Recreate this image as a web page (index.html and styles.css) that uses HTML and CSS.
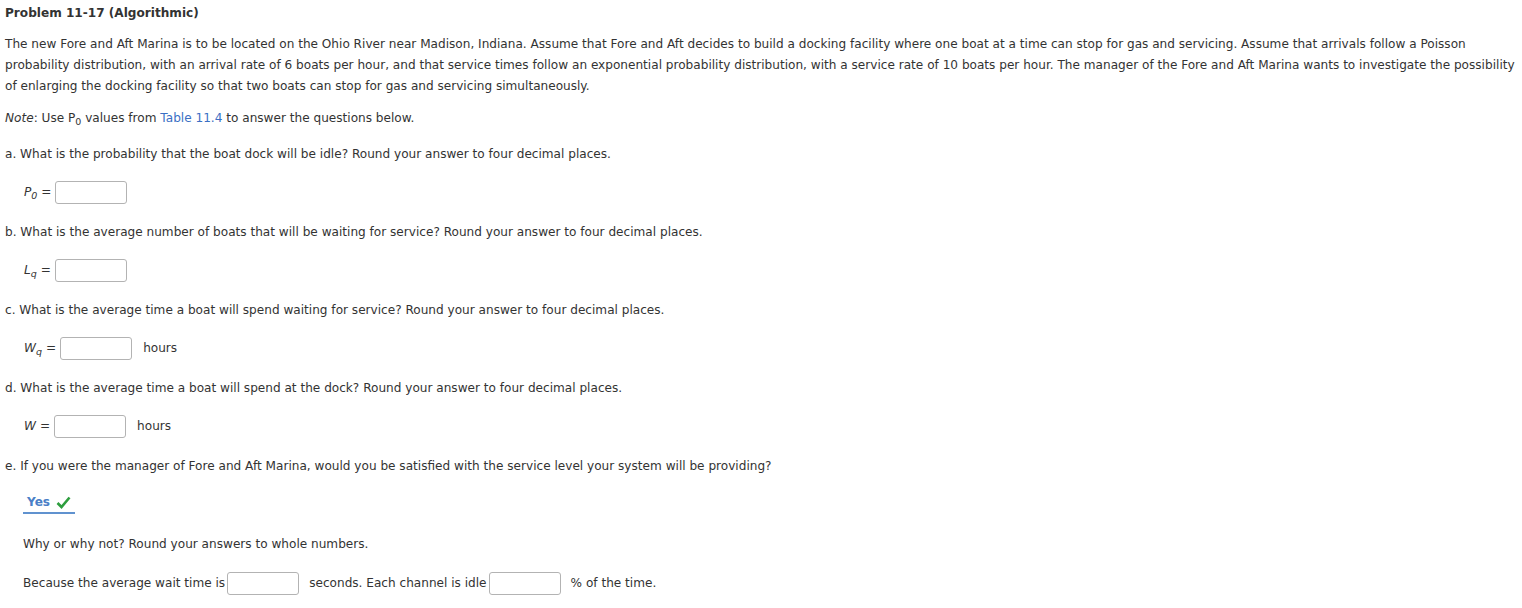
FILE: index.html
```html
<!DOCTYPE html>
<html>
<head>
<meta charset="utf-8">
<link rel="stylesheet" href="styles.css">
</head>
<body>
<div class="page">
  <h1 class="title">Problem 11-17 (Algorithmic)</h1>
  <p class="intro">The new Fore and Aft Marina is to be located on the Ohio River near Madison, Indiana. Assume that Fore and Aft decides to build a docking facility where one boat at a time can stop for gas and servicing. Assume that arrivals follow a Poisson probability distribution, with an arrival rate of 6 boats per hour, and that service times follow an exponential probability distribution, with a service rate of 10 boats per hour. The manager of the Fore and Aft Marina wants to investigate the possibility of enlarging the docking facility so that two boats can stop for gas and servicing simultaneously.</p>
  <p class="note"><i>Note</i>: Use P<sub>0</sub> values from <a class="link">Table 11.4</a> to answer the questions below.</p>

  <p class="q">a. What is the probability that the boat dock will be idle? Round your answer to four decimal places.</p>
  <div class="ans"><span class="var">P<sub>0</sub></span><span class="eq">=</span><span class="box"></span></div>

  <p class="q">b. What is the average number of boats that will be waiting for service? Round your answer to four decimal places.</p>
  <div class="ans"><span class="var">L<sub>q</sub></span><span class="eq">=</span><span class="box"></span></div>

  <p class="q">c. What is the average time a boat will spend waiting for service? Round your answer to four decimal places.</p>
  <div class="ans"><span class="var">W<sub>q</sub></span><span class="eq">=</span><span class="box"></span><span class="unit">hours</span></div>

  <p class="q">d. What is the average time a boat will spend at the dock? Round your answer to four decimal places.</p>
  <div class="ans"><span class="var">W</span><span class="eq">=</span><span class="box"></span><span class="unit">hours</span></div>

  <p class="q">e. If you were the manager of Fore and Aft Marina, would you be satisfied with the service level your system will be providing?</p>
  <div class="choice"><span class="yes">Yes</span><svg class="check" width="15" height="13" viewBox="0 0 15 13"><path d="M1.5 7 L5.5 11 L13.5 1.5" fill="none" stroke="#2e9e3e" stroke-width="2.6"/></svg></div>

  <p class="sub">Why or why not? Round your answers to whole numbers.</p>
  <div class="sentence"><span>Because the average wait time is</span><span class="box lead"></span><span class="gap">seconds. Each channel is idle</span><span class="box"></span><span class="gap">% of the time.</span></div>
</div>
</body>
</html>
```
FILE: styles.css
```css
html, body { margin: 0; padding: 0; background: #fff; }
body {
  font-family: "DejaVu Sans", Verdana, sans-serif;
  font-size: 12.1px;
  color: #333;
}
.page { padding: 5px 5px 0 5px; }
.title { font-size: 12.1px; font-weight: bold; margin: 0; line-height: 16px; }
.intro { margin: 13px 0 0 0; line-height: 21px; }
.note { margin: 13px 0 0 0; line-height: 16px; }
.note i { font-style: italic; }
sub { font-size: 9.5px; vertical-align: -3px; line-height: 0; }
.link { color: #3a6fc4; text-decoration: none; }
.q { margin: 20px 0 0 0; line-height: 16px; }
.ans { display: flex; align-items: center; margin: 18px 0 0 19px; height: 24px; }
.var { font-style: italic; }
.eq { margin: 0 4px 0 4px; }
.box {
  display: inline-block; width: 70px; height: 21px;
  border: 1px solid #b3b3b3; border-radius: 3px; background: #fff;
  vertical-align: middle;
}
.unit { margin-left: 11px; }
.choice { display: inline-flex; align-items: center; gap: 6px; margin: 21px 0 0 18px; padding: 0 4px 3px 4px; border-bottom: 2px solid #6092cf; }
.yes { color: #4a7fc7; font-weight: bold; }
.sub { margin: 22px 0 0 18px; line-height: 16px; }
.sentence { display: flex; align-items: center; margin: 19px 0 0 18px; height: 24px; white-space: pre; }
.sentence .lead { margin-left: 2px; }
.sentence .gap { margin: 0 2px 0 10px; }
```
